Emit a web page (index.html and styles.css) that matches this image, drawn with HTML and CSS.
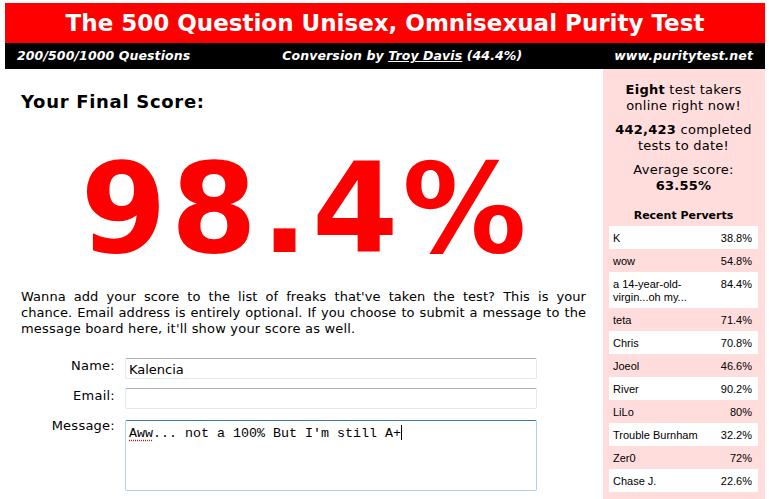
FILE: index.html
```html
<!DOCTYPE html>
<html>
<head>
<meta charset="utf-8">
<title>The 500 Question Unisex, Omnisexual Purity Test</title>
<link rel="stylesheet" href="styles.css">
</head>
<body>
<div class="title">The 500 Question Unisex, Omnisexual Purity Test</div>
<div class="bar">
  <span>200/500/1000 Questions</span>
  <span>Conversion by <a href="#">Troy Davis</a> (44.4%)</span>
  <span>www.puritytest.net</span>
</div>
<div class="content">
  <div class="main">
    <h1 class="heading">Your Final Score:</h1>
    <div class="score">98.4%</div>
    <p class="intro"><span class="jl">Wanna add your score to the list of freaks that've taken the test? This is your</span><span class="jl">chance. Email address is entirely optional. If you choose to submit a message to the</span><span class="ll">message board here, it'll show your score as well.</span></p>
    <div class="form">
      <div class="label">Name:</div>
      <div class="field">Kalencia</div>
      <div class="label">Email:</div>
      <div class="field"></div>
      <div class="label">Message:</div>
      <div class="field area"><span class="spell">Aww</span>... not a 100% But I'm still A+<span class="caret"></span></div>
    </div>
  </div>
  <div class="side">
    <p class="stat"><b>Eight</b> test takers<br>online right now!</p>
    <p class="stat"><b>442,423</b> completed<br>tests to date!</p>
    <p class="stat">Average score:<br><b>63.55%</b></p>
    <div class="recent">Recent Perverts</div>
    <div class="list">
      <div class="row"><span>K</span><span class="pct">38.8%</span></div>
      <div class="row"><span>wow</span><span class="pct">54.8%</span></div>
      <div class="row"><span>a 14-year-old-virgin...oh my...</span><span class="pct">84.4%</span></div>
      <div class="row"><span>teta</span><span class="pct">71.4%</span></div>
      <div class="row"><span>Chris</span><span class="pct">70.8%</span></div>
      <div class="row"><span>Joeol</span><span class="pct">46.6%</span></div>
      <div class="row"><span>River</span><span class="pct">90.2%</span></div>
      <div class="row"><span>LiLo</span><span class="pct">80%</span></div>
      <div class="row"><span>Trouble Burnham</span><span class="pct">32.2%</span></div>
      <div class="row"><span>Zer0</span><span class="pct">72%</span></div>
      <div class="row"><span>Chase J.</span><span class="pct">22.6%</span></div>
    </div>
  </div>
</div>
</body>
</html>
```
FILE: styles.css
```css
html {
  height: 100%;
  overflow: hidden;
}
body {
  margin: 3px 4px 0 5px;
  height: calc(100% - 3px);
  display: flex;
  flex-direction: column;
  overflow: hidden;
  background: #fff;
  font-family: "DejaVu Sans", Verdana, sans-serif;
  font-size: 13px;
  line-height: 16px;
  letter-spacing: 0.25px;
  color: #000;
}
.title {
  flex: none;
  background: #ff0000;
  color: #fff;
  font-weight: bold;
  font-size: 23px;
  letter-spacing: 0;
  height: 40px;
  line-height: 40px;
  text-align: center;
}
.bar {
  flex: none;
  background: #000;
  color: #fff;
  height: 26px;
  padding: 0 12px;
  display: flex;
  justify-content: space-between;
  align-items: center;
  font-weight: bold;
  font-style: italic;
  font-size: 12.5px;
  letter-spacing: 0.1px;
}
.bar a {
  color: #fff;
}
.content {
  flex: 1;
  min-height: 0;
  display: flex;
  align-items: stretch;
  overflow: hidden;
}
.main {
  flex: 1;
  padding: 0 17px 0 16px;
}
.heading {
  margin: 22px 0 0;
  font-size: 18px;
  line-height: 22px;
  letter-spacing: 0.7px;
  font-weight: bold;
}
.score {
  margin-top: 34px;
  padding-left: 4px;
  font-size: 124px;
  line-height: 124px;
  letter-spacing: 4px;
  font-weight: bold;
  color: #ff0000;
  text-align: center;
}
.intro {
  margin: 18px 0 0;
  letter-spacing: 0.05px;
}
.jl {
  display: block;
  white-space: nowrap;
  text-align: justify;
  text-align-last: justify;
}
.ll {
  display: block;
  letter-spacing: 0.2px;
}
.form {
  margin-top: 21px;
  display: grid;
  grid-template-columns: 94px 412px;
  column-gap: 10px;
  row-gap: 9px;
  align-items: start;
}
.label {
  text-align: right;
}
.field {
  box-sizing: border-box;
  height: 21px;
  padding: 3px 3px 0;
  border: 1px solid #e3e9ef;
  border-top-color: #abadb3;
  border-radius: 2px;
  background: #fff;
  letter-spacing: 0;
}
.area {
  height: 71px;
  margin-top: 2px;
  padding: 4px 3px 0;
  border-color: #b5cfe7;
  border-top-color: #3d7bad;
  font-family: "Liberation Mono", "Courier New", monospace;
  font-size: 13.33px;
}
.spell {
  text-decoration: underline dotted #e00000;
  text-underline-offset: 3px;
}
.caret {
  display: inline-block;
  width: 1px;
  height: 15px;
  background: #000;
  vertical-align: -3px;
}
.side {
  flex: none;
  width: 162px;
  box-sizing: border-box;
  background: #ffdddd;
  padding: 13px 7px 0 6px;
  text-align: center;
}
.stat {
  margin: 0 0 8px;
}
.recent {
  margin-top: 15px;
  font-size: 11px;
  line-height: 14px;
  letter-spacing: 0;
  font-weight: bold;
}
.list {
  margin-top: 3px;
  text-align: left;
  font-family: "Liberation Sans", Tahoma, sans-serif;
  font-size: 11px;
  line-height: 13px;
  letter-spacing: 0;
}
.row {
  display: flex;
  justify-content: space-between;
  gap: 10px;
  padding: 6px 6px 4px 4px;
}
.row:nth-child(odd) {
  background: #fff;
}
.pct {
  flex: none;
}
```
